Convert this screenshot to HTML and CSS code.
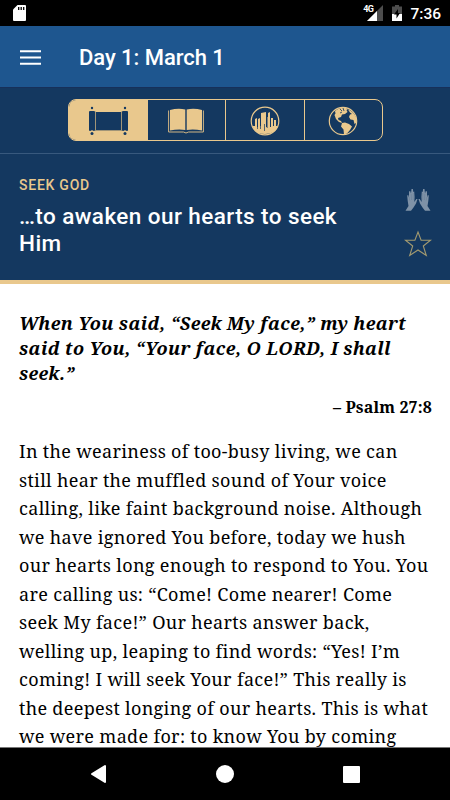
FILE: index.html
```html
<!DOCTYPE html>
<html lang="en">
<head>
  <meta charset="UTF-8">
  <meta name="viewport" content="width=device-width, initial-scale=1">
  <title>Day 1: March 1</title>
  <link rel="stylesheet" href="styles.css">
</head>
<body>
  <div class="status-bar">
    <svg class="sd-card" width="13" height="16" viewBox="0 0 13 16">
      <path d="M4.500 0H12Q13 0 13 1V15Q13 16 12 16H1Q0 16 0 15V4.500Z" fill="#fff"/>
      <path d="M5.700 2v3M8.200 2v3M10.700 2v3" stroke="#000" stroke-width="1.300"/>
    </svg>
    <div class="status-right">
      <span class="network">4G</span>
      <svg class="signal" width="16" height="16" viewBox="0 0 16 16">
        <path d="M16 0V16H0Z" fill="#4d4d4d"/>
        <path d="M10 6V16H0Z" fill="#fff"/>
      </svg>
      <svg class="battery" width="10" height="16" viewBox="0 0 10 16">
        <path d="M3 0h4v1.500h3V16H0V1.500h3Z" fill="#4d4d4d"/>
        <path d="M0 9h10v7H0Z" fill="#fff"/>
        <path d="M6 4L2 9.500h2.500V13.500L8 8H6Z" fill="#000"/>
      </svg>
      <span class="clock">7:36</span>
    </div>
  </div>

  <header class="app-bar">
    <svg width="21" height="15" viewBox="0 0 21 15">
      <path d="M0 1.200h21M0 7.500h21M0 13.800h21" stroke="#fff" stroke-width="2"/>
    </svg>
    <h1>Day 1: March 1</h1>
  </header>

  <nav class="tabs-wrap">
    <div class="tabs">
      <!-- scroll -->
      <div class="tab active">
        <svg width="40" height="30" viewBox="0 0 40 30">
          <g fill="#143860">
            <path d="M8 6h25v18H8Z"/>
            <rect x="1" y="5" width="6" height="20" rx="1"/>
            <rect x="34" y="5" width="6" height="20" rx="1"/>
            <circle cx="4" cy="2" r="1.200"/><circle cx="37" cy="2" r="1.200"/>
            <circle cx="4" cy="27.500" r="1.500"/><circle cx="37" cy="27.500" r="1.500"/>
          </g>
          <g fill="none" stroke="#8e8872" stroke-width=".8">
            <path d="M7.500 5.500V25M33.500 5.500V25M7.500 24.500h26"/>
          </g>
          <path d="M2 25.200q2-1.800 4 0q-2 1.500-4 0M35 25.200q2-1.800 4 0q-2 1.500-4 0" fill="#e9c88d"/>
        </svg>
      </div>
      <!-- book -->
      <div class="tab">
        <svg width="36" height="26" viewBox="0 0 36 26">
          <path d="M2 2Q10 0 17.300 1.500V22Q10 21 2 22.500ZM18.700 1.500Q26 0 34 2V22.500Q26 21 18.700 22Z" fill="#e9c88d"/>
          <path d="M.6 2.500V24H15.500Q18 26 20.500 24H35.400V2.500" fill="none" stroke="#d2b684" stroke-width="1"/>
        </svg>
      </div>
      <!-- city -->
      <div class="tab">
        <svg width="30" height="30" viewBox="0 0 30 30">
          <circle cx="15" cy="15" r="13.800" fill="none" stroke="#e9c88d" stroke-width="1.200"/>
          <path d="M2.500 20H5V13l2-1v9h1V13l2-1v8h1V7l5-1v15h1V11h1V7l2-1v15h1V12h2v8h1V14h2v6h2Q25.500 28 15 28T2.500 20Z" fill="#e9c88d"/>
          <path d="M17.200 9v13M20.500 11v8M7.500 13v10M10.500 12v11M14.500 18v7" stroke="#143860" stroke-width=".7"/>
        </svg>
      </div>
      <!-- globe -->
      <div class="tab">
        <svg width="30" height="30" viewBox="0 0 30 30">
          <circle cx="15" cy="15" r="13.700" fill="none" stroke="#e9c88d" stroke-width="1.200"/>
          <g fill="#e9c88d">
            <path d="M7 5Q11 1.500 17 1.500L20 3 18.500 4 19.500 6 17 8 14 8.500 13 11 10 12 10.500 14 13 15 14 17 11 16 8 13 6.500 9 7.500 7.500Z"/>
            <path d="M20 3.500Q25 5 28 11L28 17 26.500 18 25.500 14 22.500 13.500 21 11 22 8.500 24 8 22 6.500Z"/>
            <path d="M14 17L17 16.500 21 18 24 20.500 22 24 19 27.500 16 28.500 15.500 23.500 13 20.500Z"/>
          </g>
          <path d="M12 3l2 2M15 2l1 3M12 7l2-1" stroke="#143860" stroke-width=".8"/>
        </svg>
      </div>
    </div>
  </nav>

  <section class="topic">
    <div class="topic-text">
      <p class="category">SEEK GOD</p>
      <h2>…to awaken our hearts to seek Him</h2>
    </div>
    <div class="actions">
      <!-- raised hands -->
      <svg width="26" height="24" viewBox="0 0 26 24">
        <g id="hand">
          <path d="M.5 22.700L3.500 18 2.700 13 2.200 7.500 3.200 7 4 9.500 4 3.500 5.200 3 6 5.500 6.500 1 7.900 1 8.300 4 9.200 3.500 9.600 9 9.300 14 11.300 11 12.500 11 11 15.500 8.500 19.500 6 22.700Z" fill="#7f92a7"/>
          <path d="M4.200 9l.5 3.500M6.200 6l.3 6M8.300 5l-.1 7" stroke="#5f7791" stroke-width=".4" fill="none"/>
        </g>
        <use href="#hand" transform="translate(26 0) scale(-1 1)"/>
      </svg>
      <svg width="28" height="27" viewBox="0 0 28 27">
        <path d="M14 2L17.100 10.300H26.500L19.300 16 22.300 25.500 14 20 5.700 25.500 8.700 16 1.500 10.300H10.900Z" fill="none" stroke="#a39a70" stroke-width="1.100"/>
      </svg>
    </div>
  </section>

  <main class="content">
    <blockquote>
      <span>When You said, “Seek My face,” my heart</span>
      <span>said to You, “Your face, O LORD, I shall</span>
      <span>seek.”</span>
    </blockquote>
    <p class="cite">– Psalm 27:8</p>
    <p class="reading">
      <span>In the weariness of too-busy living, we can</span>
      <span>still hear the muffled sound of Your voice</span>
      <span>calling, like faint background noise. Although</span>
      <span>we have ignored You before, today we hush</span>
      <span>our hearts long enough to respond to You. You</span>
      <span>are calling us: “Come! Come nearer! Come</span>
      <span>seek My face!” Our hearts answer back,</span>
      <span>welling up, leaping to find words: “Yes! I’m</span>
      <span>coming! I will seek Your face!” This really is</span>
      <span>the deepest longing of our hearts. This is what</span>
      <span>we were made for: to know You by coming</span>
    </p>
  </main>

  <footer class="nav-bar">
    <svg width="18" height="20" viewBox="0 0 18 20">
      <path d="M16 2V18L3 10Z" fill="#fff" stroke="#fff" stroke-width="2" stroke-linejoin="round"/>
    </svg>
    <svg width="18" height="18" viewBox="0 0 18 18"><circle cx="9" cy="9" r="9" fill="#fff"/></svg>
    <svg width="17" height="17" viewBox="0 0 17 17"><rect width="17" height="17" rx="1" fill="#fff"/></svg>
  </footer>
</body>
</html>
```

FILE: styles.css
```css
* {
  box-sizing: border-box;
}

body {
  margin: 0;
  height: 800px;
  display: flex;
  flex-direction: column;
  overflow: hidden;
  background: #fff;
  font-family: Roboto, sans-serif;
}

h1, h2, p, blockquote {
  margin: 0;
}

svg {
  display: block;
  flex: none;
}

/* status bar */
.status-bar {
  flex: none;
  height: 26px;
  padding: 0 9px 0 13px;
  display: flex;
  align-items: center;
  justify-content: space-between;
  background: #000;
  color: #fff;
}

.status-right {
  display: flex;
  align-items: center;
}

.network {
  font-size: 9px;
  font-weight: 700;
  line-height: 9px;
  letter-spacing: -.5px;
  margin-right: -6px;
  margin-bottom: 8px;
  z-index: 1;
}

.battery {
  margin: 0 8px 0 9px;
}

.clock {
  font-size: 15.5px;
  font-weight: 500;
  line-height: 26px;
  padding-top: 2px;
}

/* app bar */
.app-bar {
  flex: none;
  height: 62px;
  padding: 1px 20px 0;
  display: flex;
  align-items: center;
  gap: 38px;
  background: #1e568f;
  border-bottom: 1px solid #17305a;
  color: #fff;
}

.app-bar h1 {
  font-size: 22px;
  font-weight: 500;
  line-height: 30px;
  letter-spacing: -.05px;
  padding-top: 1px;
  white-space: nowrap;
}

/* section tabs */
.tabs-wrap {
  flex: none;
  height: 66px;
  padding: 11px 67px 0 68px;
  background: #143860;
  border-bottom: 1px solid #38597e;
}

.tabs {
  height: 42px;
  display: flex;
  border: 1px solid #e9c88d;
  border-radius: 8px;
  overflow: hidden;
}

.tab {
  flex: 1;
  display: flex;
  align-items: center;
  justify-content: center;
  padding-top: 1px;
  border-left: 1px solid #e9c88d;
}

.tab:first-child {
  border-left: none;
}

.active {
  background: #e9c88d;
}

/* topic */
.topic {
  flex: none;
  height: 130px;
  padding: 21px 18px 0 19px;
  display: flex;
  justify-content: space-between;
  background: #143860;
  border-bottom: 4px solid #e9c88d;
  color: #fff;
}

.topic-text {
  width: 350px;
}

.category {
  font-size: 14px;
  font-weight: 500;
  line-height: 20px;
  letter-spacing: .75px;
  color: #e9c88d;
}

.topic h2 {
  margin-top: 8px;
  font-size: 22.5px;
  font-weight: 500;
  line-height: 27px;
  letter-spacing: .42px;
}

.actions {
  display: flex;
  flex-direction: column;
  align-items: center;
  gap: 18px;
  padding-top: 13px;
}

/* reading */
.content {
  flex: 1;
  min-height: 0;
  overflow: hidden;
  padding: 27px 18px 0 19px;
  font-family: "Noto Serif", "Droid Serif", "DejaVu Serif Condensed", "DejaVu Serif", serif;
  color: #000;
}

.content span {
  display: block;
  white-space: nowrap;
}

blockquote {
  font-size: 18px;
  font-weight: 700;
  font-style: italic;
  line-height: 25px;
  letter-spacing: .36px;
}

.cite {
  margin-top: 9px;
  font-size: 16px;
  font-weight: 700;
  line-height: 24px;
  letter-spacing: .15px;
  text-align: right;
}

.reading {
  margin-top: 18px;
  font-size: 18px;
  line-height: 28.5px;
  letter-spacing: .32px;
}

/* navigation bar */
.nav-bar {
  flex: none;
  height: 53px;
  padding: 0 90px 0 89px;
  display: flex;
  align-items: center;
  justify-content: space-between;
  background: #000;
  border-top: 1px solid #777;
}
```
